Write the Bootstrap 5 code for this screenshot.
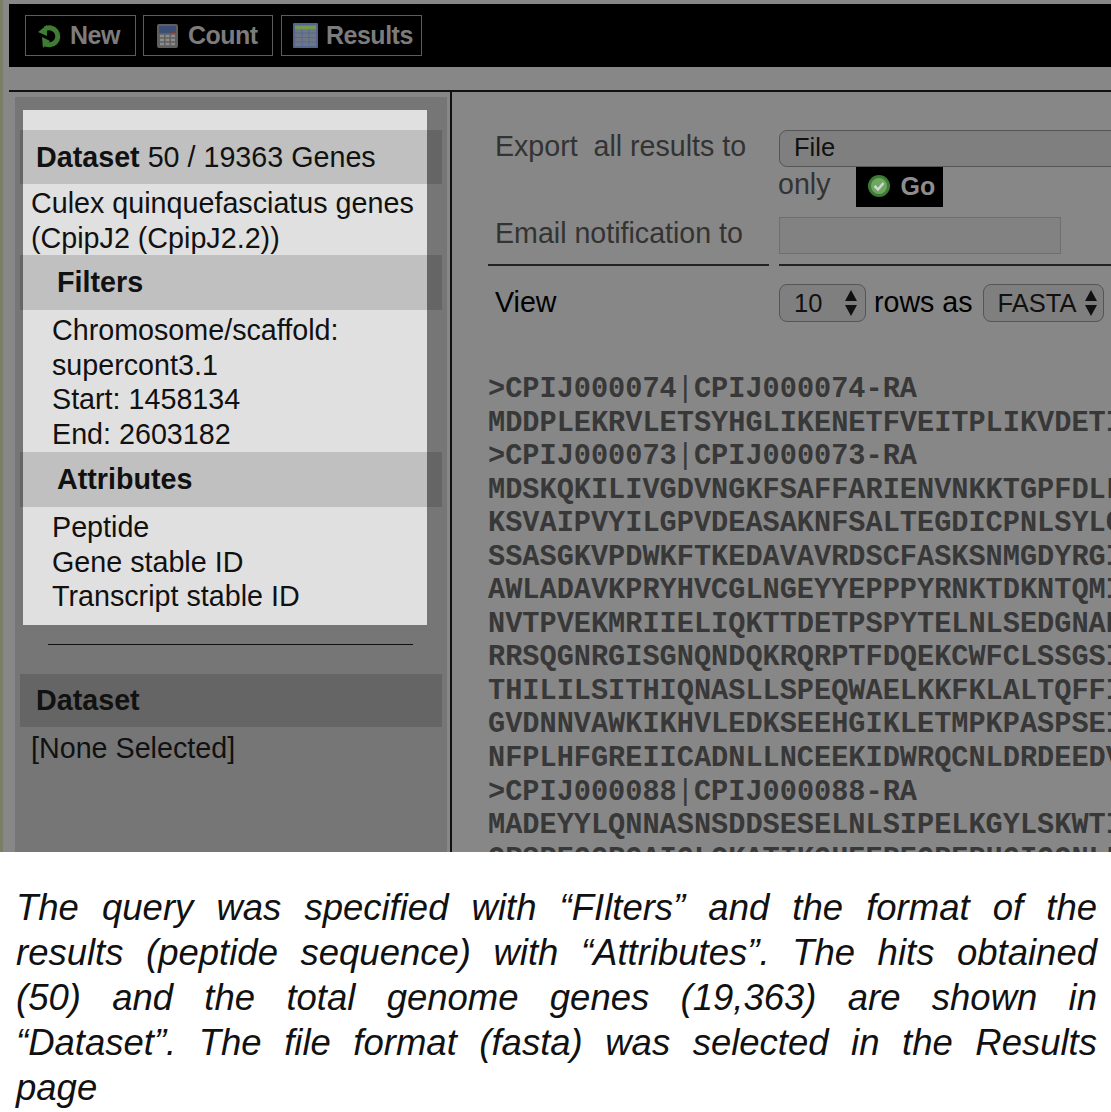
<!DOCTYPE html>
<html lang="en">
<head>
  <meta charset="UTF-8" />
  <title>Dataset results</title>
  <link href="https://cdn.jsdelivr.net/npm/bootstrap@5.3.0/dist/css/bootstrap.min.css" rel="stylesheet"/>
  <style>
    body { background: #fff; font-family: "Liberation Sans", Arial, sans-serif; }
    .shot { height: 852px; overflow: hidden; background: #878787; border-left: 3px solid #7b7d66; padding: 4px 0 0 6px; }
    .topbar { height: 63px; background: #000; padding: 11px 0 0 16px; gap: 8px; }
    .topbtn { height: 41px; border: 1px solid #5c5c5c; color: #7c7c7c; font-size: 25px; font-weight: 700; letter-spacing: -.5px; gap: 9px; }
    .btn-new { width: 111px; padding-left: 11px; }
    .btn-count { width: 130px; padding-left: 13px; gap: 10px; }
    .btn-results { width: 141px; padding-left: 11px; gap: 8px; }
    .btn-count { margin-left: -1px; }
    .rule-top { margin-top: 23px; border-top: 2px solid #111; }
    .side { width: 443px; flex: none; border-right: 2px solid #111; padding: 5px 3px 0 6px; height: 800px; }
    .side-in { background: #767676; height: 100%; padding: 13px 5px 0 8px; font-size: 28.7px; line-height: 34.6px; color: #111; }
    .pane { background: #e0e0e0; width: 404px; padding-top: 20px; }
    .head { margin: 0 -15px 0 -3px; height: 55px; background: rgba(0, 0, 0, .14); font-weight: 700; color: #111; display: flex; align-items: center; }
    .head-first { height: 54px; }
    .head-side { margin: 29px 0 0 -3px; height: 53px; }
    .pad-a { padding-left: 16px; }
    .pad-b { padding-left: 37px; }
    .body-a { padding: 2px 0 0 8px; height: 71px; }
    .body-b { padding: 3px 0 0 29px; height: 142px; }
    .body-c { padding: 3px 0 0 29px; height: 118px; }
    .side-rule { margin: 19px 0 0 25px; width: 365px; border-top: 1px solid #111; }
    .none-sel { margin: 4px 0 0 8px; }
    .main { flex: 1; min-width: 0; padding: 38px 0 0 36px; overflow: hidden; font-size: 28.6px; line-height: 32px; color: #333; }
    .lbl { width: 291px; flex: none; padding-left: 7px; }
    .row-file { height: 37px; }
    .row-only { height: 40px; }
    .row-email { height: 37px; margin-top: 10px; }
    .row-rule { margin-top: 10px; }
    .ctl { border: 1px solid #555; border-radius: 8px; background: #7f7f7f; color: #111; font-size: 25.5px; height: 37px; padding-left: 14px; }
    .ctl-file { margin-right: -20px; padding-bottom: 4px; }
    .only { margin: -6px 0 0 -1px; }
    .go { background: #000; color: #8d8d8d; font-weight: 700; font-size: 25px; width: 87px; height: 40px; gap: 9px; padding: 0 0 2px 11px; margin-left: 26px; }
    .email { width: 282px; height: 37px; border: 1px solid #6f6f6f; background: #828282; }
    .rule-l { width: 281px; margin-right: 10px; border-top: 2px solid #222; }
    .rule-r { flex: 1; border-top: 2px solid #222; }
    .view-row { margin-top: 18px; height: 38px; }
    .view-lbl { margin-top: -2px; color: #000; }
    .sel-a { width: 87px; height: 38px; justify-content: space-between; padding-right: 7px; }
    .sel-b { width: 121px; height: 38px; justify-content: space-between; padding-right: 5px; }
    .rows-as { margin: -2px 10px 0 8px; color: #000; }
    .seq { margin-top: 51px; font-family: "Liberation Mono", "Courier New", monospace; font-weight: 700; font-size: 28.6px; line-height: 33.55px; color: #383838; white-space: nowrap; }
    .pipe { font-weight: 400; }
    .cap { font-style: italic; font-size: 36.5px; line-height: 45px; word-spacing: 6px; text-align: justify; color: #111; padding: 33px 14px 0 16px; margin: 0; }
  </style>
</head>
<body>
  <div class="shot">
    <div class="topbar d-flex">
      <div class="topbtn btn-new d-flex align-items-center">
        <svg width="24" height="26" viewBox="0 0 24 26"><path d="M8 6a8.500 8.500 0 1 1-1 14" fill="none" stroke="#3f7d35" stroke-width="5"/><path d="M1 9l9-7v11zM5 14l8 4-7 7z" fill="#3f7d35"/></svg>
        <span>New</span>
      </div>
      <div class="topbtn btn-count d-flex align-items-center">
        <svg width="21" height="24" viewBox="0 0 21 24"><rect width="21" height="24" rx="2" fill="#5f5f5f"/><rect x="2" y="2" width="17" height="7" fill="#3c4d78"/><rect x="15" y="7" width="3" height="2" fill="#8a3a3a"/><path d="M3 12h15M3 16h15M3 20h15" stroke="#8c8c8c" stroke-width="2.500" stroke-dasharray="4 1.500"/></svg>
        <span>Count</span>
      </div>
      <div class="topbtn btn-results d-flex align-items-center">
        <svg width="25" height="25" viewBox="0 0 25 25"><rect width="25" height="25" rx="1" fill="#53668f"/><rect x="2" y="2" width="21" height="21" fill="#6f7684"/><rect x="2" y="3" width="21" height="3" fill="#6f9a4f"/><path d="M2 10h21M2 14.500h21M2 19h21M9 7v16M16 7v16" stroke="#586a90" stroke-width="1.200"/></svg>
        <span>Results</span>
      </div>
    </div>
    <div class="rule-top d-flex">
      <aside class="side">
        <div class="side-in">
          <div class="pane">
            <div class="head head-first pad-a">Dataset&nbsp;<span class="fw-normal">50 / 19363 Genes</span></div>
            <div class="body-a">Culex quinquefasciatus genes<br>(CpipJ2 (CpipJ2.2))</div>
            <div class="head pad-b">Filters</div>
            <div class="body-b">Chromosome/scaffold:<br>supercont3.1<br>Start: 1458134<br>End: 2603182</div>
            <div class="head pad-b">Attributes</div>
            <div class="body-c">Peptide<br>Gene stable ID<br>Transcript stable ID</div>
          </div>
          <div class="side-rule"></div>
          <div class="head head-side pad-a">Dataset</div>
          <div class="none-sel">[None Selected]</div>
        </div>
      </aside>
      <main class="main">
        <div class="d-flex row-file">
          <div class="lbl">Export&nbsp; all results to</div>
          <div class="ctl ctl-file flex-fill d-flex align-items-center">File</div>
        </div>
        <div class="d-flex align-items-center row-only">
          <div class="lbl"></div>
          <span class="only">only</span>
          <div class="go d-flex align-items-center">
            <svg width="24" height="24" viewBox="0 0 24 24"><circle cx="12" cy="12" r="11" fill="#3d7a35"/><circle cx="12" cy="12" r="8" fill="#6ea860"/><path d="M7.500 12l3.500 3.500 5.500-6.500" fill="none" stroke="#d5d5d5" stroke-width="2.500"/></svg>
            <span>Go</span>
          </div>
        </div>
        <div class="d-flex row-email">
          <div class="lbl">Email notification to</div>
          <div class="email"></div>
        </div>
        <div class="d-flex row-rule"><div class="rule-l"></div><div class="rule-r"></div></div>
        <div class="d-flex align-items-center view-row">
          <div class="lbl view-lbl">View</div>
          <div class="ctl d-flex align-items-center sel-a"><span>10</span><svg width="14" height="30" viewBox="0 0 14 30"><path d="M7 2l6 11H1zM7 28l6-11H1z" fill="#111"/></svg></div>
          <span class="rows-as">rows as</span>
          <div class="ctl d-flex align-items-center sel-b"><span>FASTA</span><svg width="14" height="30" viewBox="0 0 14 30"><path d="M7 2l6 11H1zM7 28l6-11H1z" fill="#111"/></svg></div>
        </div>
        <div class="seq">
          <div>&gt;CPIJ000074<span class="pipe">|</span>CPIJ000074-RA</div>
          <div>MDDPLEKRVLETSYHGLIKENETFVEITPLIKVDETI</div>
          <div>&gt;CPIJ000073<span class="pipe">|</span>CPIJ000073-RA</div>
          <div>MDSKQKILIVGDVNGKFSAFFARIENVNKKTGPFDLL</div>
          <div>KSVAIPVYILGPVDEASAKNFSALTEGDICPNLSYLG</div>
          <div>SSASGKVPDWKFTKEDAVAVRDSCFASKSNMGDYRGI</div>
          <div>AWLADAVKPRYHVCGLNGEYYEPPPYRNKTDKNTQMI</div>
          <div>NVTPVEKMRIIELIQKTTDETPSPYTELNLSEDGNAE</div>
          <div>RRSQGNRGISGNQNDQKRQRPTFDQEKCWFCLSSGSI</div>
          <div>THILILSITHIQNASLLSPEQWAELKKFKLALTQFFI</div>
          <div>GVDNNVAWKIKHVLEDKSEEHGIKLETMPKPASPSEI</div>
          <div>NFPLHFGREIICADNLLNCEEKIDWRQCNLDRDEEDV</div>
          <div>&gt;CPIJ000088<span class="pipe">|</span>CPIJ000088-RA</div>
          <div>MADEYYLQNNASNSDDSESELNLSIPELKGYLSKWTI</div>
          <div>ORSPEGGRGAIGLOKATIKGHEEPEGPEPHGIGONLL</div>
        </div>
      </main>
    </div>
  </div>
  <p class="cap">The query was specified with “FIlters” and the format of the results (peptide sequence) with “Attributes”. The hits obtained (50) and the total genome genes (19,363) are shown in “Dataset”. The file format (fasta) was selected in the Results page</p>
</body>
</html>
